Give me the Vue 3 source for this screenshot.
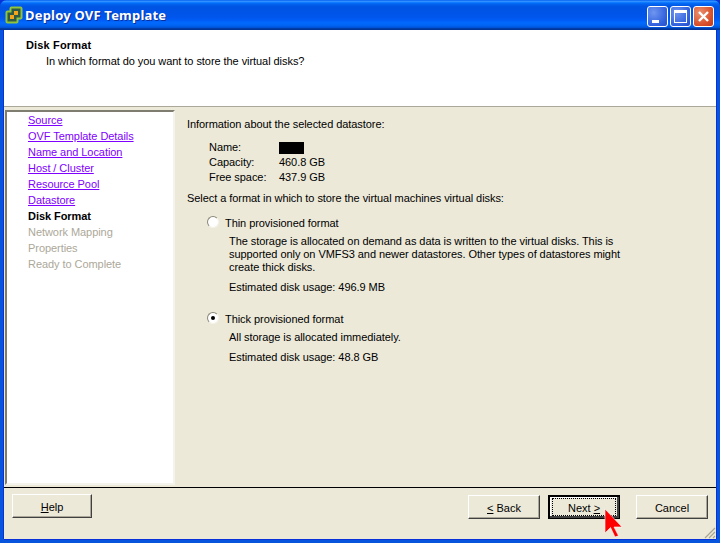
<script setup>
const done = ['Source','OVF Template Details','Name and Location','Host / Cluster','Resource Pool','Datastore']
const todo = ['Network Mapping','Properties','Ready to Complete']
</script>

<template>
  <div class="window">
    <div class="titlebar">
      <svg class="logo" width="18" height="18" viewBox="0 0 18 18">
        <path d="M6.5 1.5h9a1 1 0 0 1 1 1v9a1 1 0 0 1-1 1h-3v3a1 1 0 0 1-1 1h-9a1 1 0 0 1-1-1v-9a1 1 0 0 1 1-1h3v-3a1 1 0 0 1 1-1z" fill="#2f5a46" stroke="#8fc43a" stroke-width="2"/>
        <rect x="9" y="5" width="4" height="4" fill="#f5a51c"/>
        <rect x="5" y="9" width="4" height="4" fill="#f5a51c"/>
      </svg>
      <span class="title">Deploy OVF Template</span>
      <div class="caps">
        <div class="cap"><span class="min"></span></div>
        <div class="cap"><span class="max"></span></div>
        <div class="cap close">
          <svg width="13" height="13" viewBox="0 0 13 13"><path d="M2 2l9 9M11 2l-9 9" stroke="#fff" stroke-width="2.4"/></svg>
        </div>
      </div>
    </div>
    <div class="client">
      <header class="head">
        <div class="h1">Disk Format</div>
        <div class="h2">In which format do you want to store the virtual disks?</div>
      </header>
      <div class="mid">
        <nav class="steps">
          <a v-for="s in done" :key="s" class="step link">{{ s }}</a>
          <div class="step cur">Disk Format</div>
          <div v-for="s in todo" :key="s" class="step off">{{ s }}</div>
        </nav>
        <main class="pane">
          <div class="line">Information about the selected datastore:</div>
          <div class="info">
            <div class="row"><span class="k">Name:</span><span class="redact"></span></div>
            <div class="row"><span class="k">Capacity:</span><span>460.8 GB</span></div>
            <div class="row"><span class="k">Free space:</span><span>437.9 GB</span></div>
          </div>
          <div class="line sel">Select a format in which to store the virtual machines virtual disks:</div>
          <div class="opt first">
            <div class="radio-row"><span class="radio"></span><span>Thin provisioned format</span></div>
            <div class="desc">The storage is allocated on demand as data is written to the virtual disks. This is<br>supported only on VMFS3 and newer datastores. Other types of datastores might<br>create thick disks.</div>
            <div class="est">Estimated disk usage: 496.9 MB</div>
          </div>
          <div class="opt second">
            <div class="radio-row"><span class="radio on"></span><span>Thick provisioned format</span></div>
            <div class="desc">All storage is allocated immediately.</div>
            <div class="est">Estimated disk usage: 48.8 GB</div>
          </div>
        </main>
      </div>
      <footer class="foot">
        <button class="btn help"><span><u>H</u>elp</span></button>
        <div class="spacer"></div>
        <button class="btn back"><span><u>&lt;</u> Back</span></button>
        <button class="btn def"><span class="focus">Next <u>&gt;</u></span></button>
        <button class="btn cancel"><span>Cancel</span></button>
        <svg class="cursor" width="20" height="30" viewBox="0 0 20 30">
          <path d="M1 1v24l5.5-5.5L11 29l3.5-1.2L10 19h8z" fill="#f00" stroke="#fff" stroke-width="0.6"/>
        </svg>
        <svg class="grip" width="12" height="12" viewBox="0 0 12 12">
          <path d="M11 1L1 11M11 5L5 11M11 9l-2 2" stroke="#a8a594" stroke-width="1.2"/>
        </svg>
      </footer>
    </div>
  </div>
</template>

<style>
html, body { margin: 0; background: #0831d9; }
</style>

<style scoped>
.window {
  width: 720px; height: 543px; box-sizing: border-box;
  display: flex; flex-direction: column;
  background: #0855dd;
  border-radius: 7px 7px 0 0;
  font-family: "Liberation Sans", sans-serif;
  font-size: 11px; letter-spacing: -0.06px; color: #000;
  overflow: hidden;
}
.titlebar {
  height: 30px; flex: none; display: flex; align-items: center;
  padding: 0 6px 0 5px; box-sizing: border-box;
  background: linear-gradient(#0058ee 0, #3593ff 4%, #288eff 6%, #127dff 8%, #036ffc 10%, #0262ee 14%, #0057e5 20%, #0054e3 24%, #0055eb 56%, #005bf5 66%, #026afe 76%, #0062ef 86%, #0052d6 92%, #0040ab 94%, #003092 100%);
}
.logo { margin-right: 2px; }
.title {
  flex: 1; color: #fff; font-family: "Noto Sans", sans-serif; font-weight: bold; font-size: 13px;
  letter-spacing: 0.2px;
  text-shadow: 1px 1px 0 #0a2f9a;
}
.caps { display: flex; gap: 2px; margin-top: 2px; }
.cap {
  width: 21px; height: 21px; box-sizing: border-box;
  border: 1px solid #fff; border-radius: 3px;
  background: radial-gradient(circle at 30% 30%, #6f96f0, #2f5fdc 70%, #2a50c8);
  display: flex; align-items: center; justify-content: center; position: relative;
}
.close { background: radial-gradient(circle at 30% 30%, #ea9070, #d8502a 65%, #c03818); }
.min { position: absolute; left: 4px; top: 13px; width: 7px; height: 3px; background: #fff; }
.max { width: 13px; height: 13px; box-sizing: border-box; border: 1px solid #fff; border-top-width: 3px; }
.client {
  flex: 1; min-height: 0; margin: 0 4px 4px; background: #ece9d8;
  display: flex; flex-direction: column;
  box-shadow: -1px 0 0 #0831d9, 1px 0 0 #0831d9, 0 1px 0 #0831d9;
}
.head {
  height: 77px; flex: none; box-sizing: border-box; background: #fff;
  padding: 8px 0 0 22px; border-bottom: 1px solid #aca899;
}
.h1 { font-weight: bold; line-height: 14px; letter-spacing: 0.15px; }
.h2 { margin: 2px 0 0 20px; line-height: 14px; }
.mid { flex: 1; min-height: 0; display: flex; padding-top: 3px; border-bottom: 1px solid #000; }
.steps {
  width: 170px; margin: 0 0 2px 1px; box-sizing: border-box; flex: none;
  background: #fff; padding: 0 0 0 21px;
  border: 2px solid;
  border-color: #7f7d70 #f5f4ec #f5f4ec #7f7d70;
  display: flex; flex-direction: column;
}
.step { height: 16px; line-height: 16px; white-space: nowrap; }
.link { color: #8000ff; text-decoration: underline; }
.cur { font-weight: bold; }
.off { color: #aca899; }
.pane { flex: 1; padding: 6px 0 0 12px; }
.line { line-height: 16px; }
.info { margin: 8px 0 0 22px; }
.row { display: flex; height: 15px; line-height: 15px; align-items: center; }
.k { width: 70px; }
.redact { width: 25px; height: 12px; background: #000; }
.sel { margin-top: 5px; }
.opt { margin-left: 20px; }
.first { margin-top: 9px; }
.second { margin-top: 17px; }
.radio-row { display: flex; align-items: center; height: 16px; line-height: 16px; }
.radio {
  width: 12px; height: 12px; border-radius: 50%; background: #fff; margin: -2px 6px 0 0;
  border: 1.5px solid; border-color: #8a8878 #f4f3ea #f4f3ea #8a8878; box-sizing: border-box; position: relative;
}
.radio.on::after {
  content: ""; position: absolute; left: 2.5px; top: 2.5px; width: 4px; height: 4px;
  border-radius: 50%; background: #000;
}
.desc { margin: 4px 0 0 22px; line-height: 13px; }
.est { margin: 6px 0 0 22px; line-height: 14px; }
.foot {
  height: 51px; flex: none; box-sizing: border-box; position: relative;
  display: flex; align-items: flex-start; padding: 7px 8px 0 8px;
}
.spacer { flex: 1; }
.btn {
  width: 72px; height: 24px; padding: 2px 0 0; box-sizing: border-box;
  background: #ece9d8; font: inherit; color: #000;
  border: 1px solid; border-color: #fff #404040 #404040 #fff;
  box-shadow: inset -1px -1px 0 #aca899;
  display: flex; align-items: center; justify-content: center;
}
.help { width: 80px; margin-top: -1px; padding-top: 1px; }
.btn.def { margin-left: 8px; padding: 0; border: 1px solid #000; box-shadow: 1px 1px 0 #000 inset, inset -2px -2px 0 #404040, inset 2px 2px 0 #fff; }
.focus { width: 64px; height: 18px; padding-top: 1px; line-height: 16px; box-sizing: border-box; border: 1px dotted #000; text-align: center; }
.cancel { margin-left: 16px; }
.cursor { position: absolute; left: 600px; top: 20px; }
.grip { position: absolute; right: 0; bottom: 0; }
</style>
